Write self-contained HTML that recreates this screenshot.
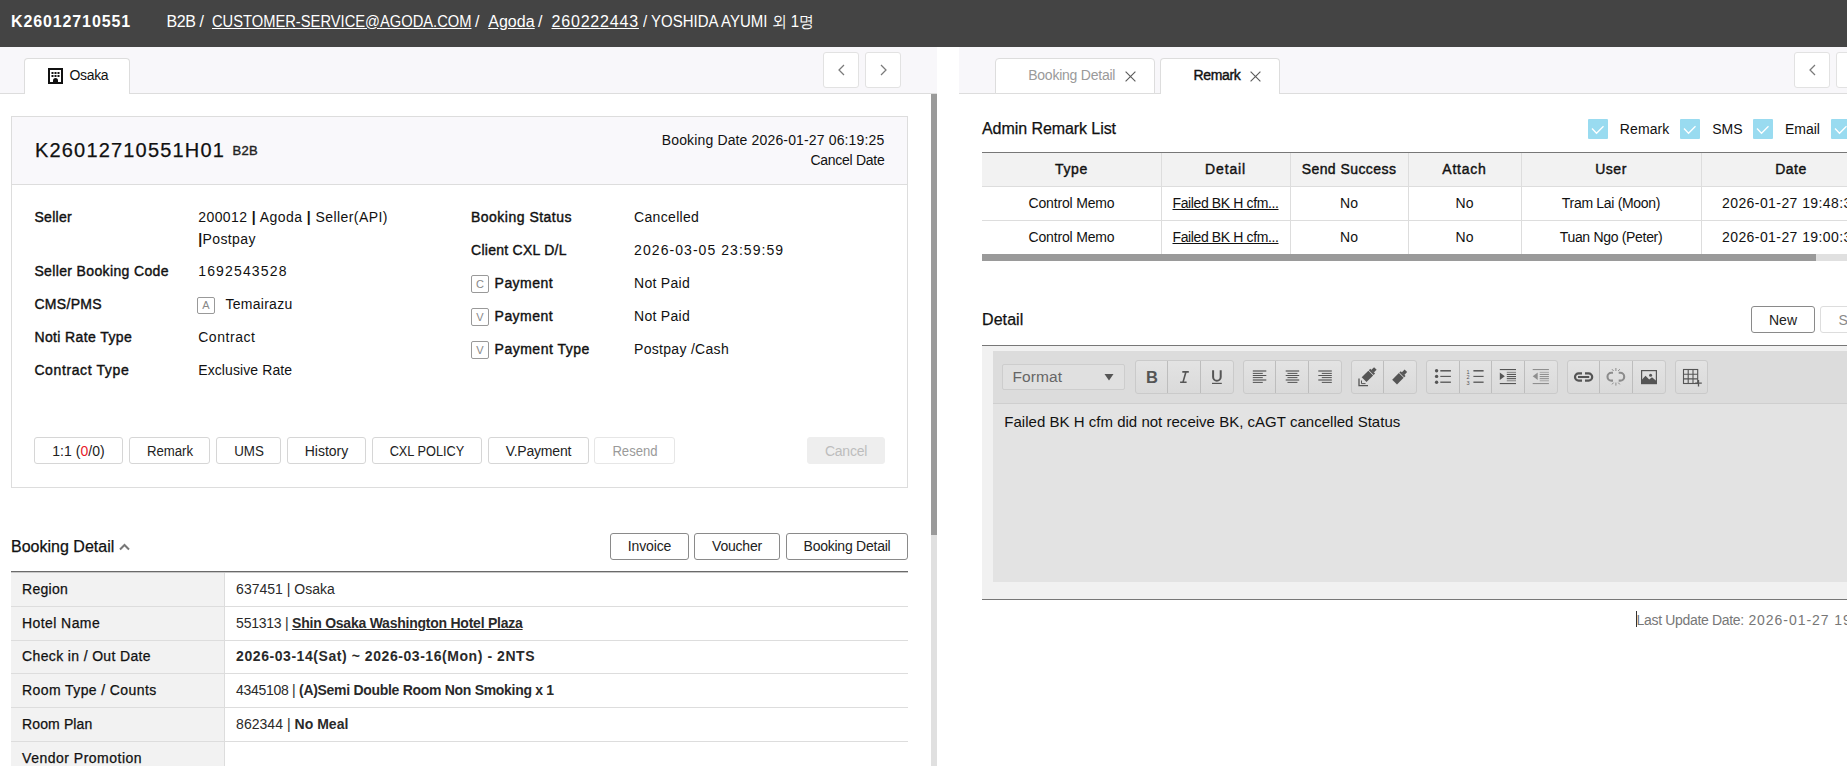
<!DOCTYPE html><html><head><meta charset="utf-8"><style>
html,body{margin:0;padding:0;}
body{width:1847px;height:766px;overflow:hidden;position:relative;background:#fff;font-family:"Liberation Sans", sans-serif;}
b{font-weight:700}
</style></head><body>

<div style="position:absolute;left:0;top:0;width:1847px;height:47px;background:#444444"></div>
<div style="position:absolute;left:0;top:47px;width:937px;height:46px;background:#f8f7fa;border-bottom:1px solid #dddddd"></div>
<div style="position:absolute;left:24px;top:58px;width:106px;height:36px;background:#fff;border:1px solid #dddddd;border-bottom:none;border-radius:4px 4px 0 0;box-sizing:border-box"></div>
<svg style="position:absolute;left:48px;top:68px" width="15" height="16" viewBox="0 0 15 16">
<rect x="1" y="1" width="13" height="14" fill="none" stroke="#111" stroke-width="2"/>
<rect x="3.5" y="4" width="2" height="2" fill="#111"/><rect x="6.5" y="4" width="2" height="2" fill="#111"/><rect x="9.5" y="4" width="2" height="2" fill="#111"/>
<rect x="3.5" y="7" width="2" height="2" fill="#111"/><rect x="6.5" y="7" width="2" height="2" fill="#111"/><rect x="9.5" y="7" width="2" height="2" fill="#111"/>
<path d="M5 15 V12.5 A2.5 2.5 0 0 1 10 12.5 V15 Z" fill="#111"/>
</svg>
<div style="position:absolute;left:823px;top:52px;width:36px;height:36px;background:#fff;border:1px solid #e2e2e2;border-radius:3px;box-sizing:border-box"></div>
<svg style="position:absolute;left:835px;top:62px" width="13" height="16" viewBox="0 0 13 16"><path d="M9 3 L4 8 L9 13" fill="none" stroke="#7a7a7a" stroke-width="1.25"/></svg>
<div style="position:absolute;left:865px;top:52px;width:36px;height:36px;background:#fff;border:1px solid #e2e2e2;border-radius:3px;box-sizing:border-box"></div>
<svg style="position:absolute;left:877px;top:62px" width="13" height="16" viewBox="0 0 13 16"><path d="M4 3 L9 8 L4 13" fill="none" stroke="#7a7a7a" stroke-width="1.25"/></svg>
<div style="position:absolute;left:931px;top:94px;width:6px;height:672px;background:#e0e0e0"></div>
<div style="position:absolute;left:931px;top:94px;width:6px;height:441px;background:#9a9a9a"></div>
<div style="position:absolute;left:11px;top:116px;width:897px;height:372px;border:1px solid #dddddd;box-sizing:border-box;background:#fff"></div>
<div style="position:absolute;left:12px;top:117px;width:895px;height:67px;background:#f9f8fb;border-bottom:1px solid #dddddd"></div>
<div style="position:absolute;left:197px;top:297px;width:18px;height:17px;border:1px solid #999;border-radius:2px;box-sizing:border-box;background:#fff;font:11px/15px 'Liberation Sans',sans-serif;color:#888;text-align:center">A</div>
<div style="position:absolute;left:471px;top:275px;width:18px;height:18px;border:1px solid #999;border-radius:2px;box-sizing:border-box;background:#fff;font:11px/16px 'Liberation Sans',sans-serif;color:#888;text-align:center">C</div>
<div style="position:absolute;left:471px;top:308px;width:18px;height:18px;border:1px solid #999;border-radius:2px;box-sizing:border-box;background:#fff;font:11px/16px 'Liberation Sans',sans-serif;color:#888;text-align:center">V</div>
<div style="position:absolute;left:471px;top:341px;width:18px;height:18px;border:1px solid #999;border-radius:2px;box-sizing:border-box;background:#fff;font:11px/16px 'Liberation Sans',sans-serif;color:#888;text-align:center">V</div>
<div style="position:absolute;left:34px;top:437px;width:89px;height:27px;border:1px solid #d6d6d6;border-radius:3px;box-sizing:border-box;background:#fff"></div>
<div style="position:absolute;left:129px;top:437px;width:81px;height:27px;border:1px solid #d6d6d6;border-radius:3px;box-sizing:border-box;background:#fff"></div>
<div style="position:absolute;left:216px;top:437px;width:65px;height:27px;border:1px solid #d6d6d6;border-radius:3px;box-sizing:border-box;background:#fff"></div>
<div style="position:absolute;left:287px;top:437px;width:79px;height:27px;border:1px solid #d6d6d6;border-radius:3px;box-sizing:border-box;background:#fff"></div>
<div style="position:absolute;left:372px;top:437px;width:110px;height:27px;border:1px solid #d6d6d6;border-radius:3px;box-sizing:border-box;background:#fff"></div>
<div style="position:absolute;left:488px;top:437px;width:101px;height:27px;border:1px solid #d6d6d6;border-radius:3px;box-sizing:border-box;background:#fff"></div>
<div style="position:absolute;left:594px;top:437px;width:81px;height:27px;border:1px solid #e6e6e6;border-radius:3px;box-sizing:border-box;background:#fff"></div>
<div style="position:absolute;left:807px;top:437px;width:78px;height:27px;border:1px solid #eeeeee;border-radius:3px;box-sizing:border-box;background:#eeeeee"></div>
<svg style="position:absolute;left:118px;top:542px" width="13" height="10" viewBox="0 0 13 10"><path d="M2 7.5 L6.5 3 L11 7.5" fill="none" stroke="#777" stroke-width="2"/></svg>
<div style="position:absolute;left:610px;top:533px;width:79px;height:27px;border:1px solid #8a8a8a;border-radius:3px;box-sizing:border-box;background:#fff"></div>
<div style="position:absolute;left:694px;top:533px;width:86px;height:27px;border:1px solid #8a8a8a;border-radius:3px;box-sizing:border-box;background:#fff"></div>
<div style="position:absolute;left:786px;top:533px;width:122px;height:27px;border:1px solid #8a8a8a;border-radius:3px;box-sizing:border-box;background:#fff"></div>
<div style="position:absolute;left:11px;top:571px;width:897px;height:1px;background:#6a6a6a"></div>
<div style="position:absolute;left:11px;top:572px;width:897px;height:1px;background:#c8c8c8"></div>
<div style="position:absolute;left:11px;top:573px;width:213px;height:193px;background:#f2f2f2"></div>
<div style="position:absolute;left:224px;top:573px;width:1px;height:193px;background:#dddddd"></div>
<div style="position:absolute;left:11px;top:606px;width:897px;height:1px;background:#dddddd"></div>
<div style="position:absolute;left:11px;top:640px;width:897px;height:1px;background:#dddddd"></div>
<div style="position:absolute;left:11px;top:673px;width:897px;height:1px;background:#dddddd"></div>
<div style="position:absolute;left:11px;top:707px;width:897px;height:1px;background:#dddddd"></div>
<div style="position:absolute;left:11px;top:741px;width:897px;height:1px;background:#dddddd"></div>
<div style="position:absolute;left:959px;top:47px;width:888px;height:46px;background:#f8f7fa;border-bottom:1px solid #dddddd"></div>
<div style="position:absolute;left:995px;top:58px;width:160px;height:36px;background:#fff;border:1px solid #dddddd;border-radius:4px 4px 0 0;box-sizing:border-box"></div>
<div style="position:absolute;left:1160px;top:58px;width:120px;height:36px;background:#fff;border:1px solid #dddddd;border-bottom:none;border-radius:4px 4px 0 0;box-sizing:border-box"></div>
<svg style="position:absolute;left:1124.5px;top:70.5px" width="11" height="11" viewBox="0 0 11 11"><path d="M0.6 0.6 L10.4 10.4 M10.4 0.6 L0.6 10.4" stroke="#5c5c5c" stroke-width="1.15"/></svg>
<svg style="position:absolute;left:1249.5px;top:70.5px" width="11" height="11" viewBox="0 0 11 11"><path d="M0.6 0.6 L10.4 10.4 M10.4 0.6 L0.6 10.4" stroke="#5c5c5c" stroke-width="1.15"/></svg>
<div style="position:absolute;left:1794px;top:52px;width:36px;height:36px;background:#fff;border:1px solid #e2e2e2;border-radius:3px;box-sizing:border-box"></div>
<svg style="position:absolute;left:1806px;top:62px" width="13" height="16" viewBox="0 0 13 16"><path d="M9 3 L4 8 L9 13" fill="none" stroke="#7a7a7a" stroke-width="1.25"/></svg>
<div style="position:absolute;left:1836px;top:52px;width:36px;height:36px;background:#fff;border:1px solid #e2e2e2;border-radius:3px;box-sizing:border-box"></div>
<div style="position:absolute;left:1588px;top:119px;width:20px;height:20px;background:#99dbf0;border-radius:1px"></div>
<svg style="position:absolute;left:1588px;top:119px" width="20" height="20" viewBox="0 0 20 20"><path d="M4 9.5 L8.5 14.2 L15.5 7.2" fill="none" stroke="#fff" stroke-width="1.3"/></svg>
<div style="position:absolute;left:1680px;top:119px;width:20px;height:20px;background:#99dbf0;border-radius:1px"></div>
<svg style="position:absolute;left:1680px;top:119px" width="20" height="20" viewBox="0 0 20 20"><path d="M4 9.5 L8.5 14.2 L15.5 7.2" fill="none" stroke="#fff" stroke-width="1.3"/></svg>
<div style="position:absolute;left:1753px;top:119px;width:20px;height:20px;background:#99dbf0;border-radius:1px"></div>
<svg style="position:absolute;left:1753px;top:119px" width="20" height="20" viewBox="0 0 20 20"><path d="M4 9.5 L8.5 14.2 L15.5 7.2" fill="none" stroke="#fff" stroke-width="1.3"/></svg>
<div style="position:absolute;left:1831px;top:119px;width:20px;height:20px;background:#99dbf0;border-radius:1px"></div>
<svg style="position:absolute;left:1831px;top:119px" width="20" height="20" viewBox="0 0 20 20"><path d="M4 9.5 L8.5 14.2 L15.5 7.2" fill="none" stroke="#fff" stroke-width="1.3"/></svg>
<div style="position:absolute;left:982px;top:152px;width:865px;height:1px;background:#777"></div>
<div style="position:absolute;left:982px;top:153px;width:865px;height:33px;background:#f2f2f2"></div>
<div style="position:absolute;left:982px;top:186px;width:865px;height:1px;background:#dddddd"></div>
<div style="position:absolute;left:982px;top:220px;width:865px;height:1px;background:#dddddd"></div>
<div style="position:absolute;left:1161px;top:153px;width:1px;height:101px;background:#dddddd"></div>
<div style="position:absolute;left:1290px;top:153px;width:1px;height:101px;background:#dddddd"></div>
<div style="position:absolute;left:1408px;top:153px;width:1px;height:101px;background:#dddddd"></div>
<div style="position:absolute;left:1521px;top:153px;width:1px;height:101px;background:#dddddd"></div>
<div style="position:absolute;left:1701px;top:153px;width:1px;height:101px;background:#dddddd"></div>
<div style="position:absolute;left:982px;top:254px;width:865px;height:7px;background:#e0e0e0"></div>
<div style="position:absolute;left:982px;top:254px;width:834px;height:7px;background:#9a9a9a"></div>
<div style="position:absolute;left:1751px;top:306px;width:64px;height:27px;border:1px solid #8a8a8a;border-radius:3px;box-sizing:border-box;background:#fff"></div>
<div style="position:absolute;left:1820px;top:306px;width:60px;height:27px;border:1px solid #dddddd;border-radius:3px;box-sizing:border-box;background:#fff"></div>
<div style="position:absolute;left:982px;top:345px;width:865px;height:1px;background:#777"></div>
<div style="position:absolute;left:982px;top:346px;width:865px;height:253px;background:#f1f1f1"></div>
<div style="position:absolute;left:982px;top:599px;width:865px;height:1px;background:#777"></div>
<div style="position:absolute;left:993px;top:351px;width:854px;height:52px;background:#dcdcdc;border-bottom:1px solid #cfcfcf"></div>
<div style="position:absolute;left:993px;top:404px;width:854px;height:178px;background:#e3e3e3"></div>
<div style="position:absolute;left:1002px;top:364px;width:123px;height:26px;background:#e0e0e0;border:1px solid #cdcdcd;border-radius:2px;box-sizing:border-box"></div>
<svg style="position:absolute;left:1104px;top:373px" width="10" height="8" viewBox="0 0 10 8"><path d="M0.5 1 L9.5 1 L5 7.5 Z" fill="#555"/></svg>
<div style="position:absolute;left:1135px;top:360px;width:99px;height:34px;background:linear-gradient(#e3e3e3,#dadada);border:1px solid #cacaca;border-radius:3px;box-sizing:border-box"></div>
<div style="position:absolute;left:1167px;top:361px;width:1px;height:32px;background:#bdbdbd"></div>
<div style="position:absolute;left:1200px;top:361px;width:1px;height:32px;background:#bdbdbd"></div>
<div style="position:absolute;left:1243px;top:360px;width:99px;height:34px;background:linear-gradient(#e3e3e3,#dadada);border:1px solid #cacaca;border-radius:3px;box-sizing:border-box"></div>
<div style="position:absolute;left:1275px;top:361px;width:1px;height:32px;background:#bdbdbd"></div>
<div style="position:absolute;left:1308px;top:361px;width:1px;height:32px;background:#bdbdbd"></div>
<div style="position:absolute;left:1351px;top:360px;width:66px;height:34px;background:linear-gradient(#e3e3e3,#dadada);border:1px solid #cacaca;border-radius:3px;box-sizing:border-box"></div>
<div style="position:absolute;left:1383px;top:361px;width:1px;height:32px;background:#bdbdbd"></div>
<div style="position:absolute;left:1426px;top:360px;width:132px;height:34px;background:linear-gradient(#e3e3e3,#dadada);border:1px solid #cacaca;border-radius:3px;box-sizing:border-box"></div>
<div style="position:absolute;left:1459px;top:361px;width:1px;height:32px;background:#bdbdbd"></div>
<div style="position:absolute;left:1491px;top:361px;width:1px;height:32px;background:#bdbdbd"></div>
<div style="position:absolute;left:1524px;top:361px;width:1px;height:32px;background:#bdbdbd"></div>
<div style="position:absolute;left:1567px;top:360px;width:99px;height:34px;background:linear-gradient(#e3e3e3,#dadada);border:1px solid #cacaca;border-radius:3px;box-sizing:border-box"></div>
<div style="position:absolute;left:1599px;top:361px;width:1px;height:32px;background:#bdbdbd"></div>
<div style="position:absolute;left:1632px;top:361px;width:1px;height:32px;background:#bdbdbd"></div>
<div style="position:absolute;left:1675px;top:360px;width:33px;height:34px;background:linear-gradient(#e3e3e3,#dadada);border:1px solid #cacaca;border-radius:3px;box-sizing:border-box"></div>
<svg style="position:absolute;left:0;top:0" width="1847" height="766" viewBox="0 0 1847 766"><text x="1146" y="383" font-family="Liberation Sans" font-weight="700" font-size="16.5" fill="#555">B</text><path d="M1182.3 371.9 H1188.8 M1180.1 382.2 H1186.6 M1185.9 372 L1183 382.1" fill="none" stroke="#555" stroke-width="1.6"/><path d="M1213.1 370.2 V376.9 A3.8 3.8 0 0 0 1220.7 376.9 V370.2" fill="none" stroke="#555" stroke-width="2"/><rect x="1212" y="382.8" width="9.8" height="1.2" fill="#555"/><rect x="1252.80" y="370.2" width="13.5" height="1.6" fill="#7a7a7a"/><rect x="1252.80" y="372.9" width="10" height="1" fill="#555"/><rect x="1252.80" y="375" width="13.5" height="1" fill="#555"/><rect x="1252.80" y="377.1" width="10" height="1" fill="#555"/><rect x="1252.80" y="379.2" width="13.5" height="1.6" fill="#7a7a7a"/><rect x="1252.80" y="381.9" width="10" height="1" fill="#555"/><rect x="1285.70" y="370.2" width="13.5" height="1.6" fill="#7a7a7a"/><rect x="1287.45" y="372.9" width="10" height="1" fill="#555"/><rect x="1285.70" y="375" width="13.5" height="1" fill="#555"/><rect x="1287.45" y="377.1" width="10" height="1" fill="#555"/><rect x="1285.70" y="379.2" width="13.5" height="1.6" fill="#7a7a7a"/><rect x="1287.45" y="381.9" width="10" height="1" fill="#555"/><rect x="1318.30" y="370.2" width="13.5" height="1.6" fill="#7a7a7a"/><rect x="1321.80" y="372.9" width="10" height="1" fill="#555"/><rect x="1318.30" y="375" width="13.5" height="1" fill="#555"/><rect x="1321.80" y="377.1" width="10" height="1" fill="#555"/><rect x="1318.30" y="379.2" width="13.5" height="1.6" fill="#7a7a7a"/><rect x="1321.80" y="381.9" width="10" height="1" fill="#555"/><g transform="translate(1370.4 373.4) rotate(45)" fill="#555"><rect x="-3.4" y="-0.5" width="6.8" height="9.4"/><rect x="-3.4" y="-3.2" width="6.8" height="2"/><rect x="-1.8" y="-7" width="3.6" height="4"/></g><path d="M1359 378.5 V385.6 H1368" fill="none" stroke="#555" stroke-width="1.3"/><path d="M1361.5 380.5 V383.6 H1365.5" fill="none" stroke="#555" stroke-width="1"/><g transform="translate(1400.9 375.8) rotate(45)" fill="#555"><rect x="-3.4" y="-0.5" width="6.8" height="9.4"/><rect x="-3.4" y="-3.2" width="6.8" height="2"/><rect x="-1.8" y="-7" width="3.6" height="4"/></g><circle cx="1436.6" cy="370.8" r="1.7" fill="#555"/><rect x="1440.3" y="370.05" width="10.6" height="1.5" fill="#555"/><circle cx="1436.6" cy="376.4" r="1.7" fill="#555"/><rect x="1440.3" y="375.85" width="10.6" height="1.1" fill="#555"/><circle cx="1436.6" cy="382.2" r="1.7" fill="#555"/><rect x="1440.3" y="381.55" width="10.6" height="1.3" fill="#555"/><g font-family="Liberation Sans" font-size="5.5" fill="#555"><text x="1466.6" y="373.6">1</text><text x="1466.6" y="379.2">2</text><text x="1466.6" y="385">3</text></g><rect x="1473.4" y="370.05" width="10.2" height="1.5" fill="#555"/><rect x="1473.4" y="375.85" width="10.2" height="1.1" fill="#555"/><rect x="1473.4" y="381.55" width="10.2" height="1.3" fill="#555"/><rect x="1499.8" y="369" width="16.2" height="1.1" fill="#555"/><rect x="1499.8" y="383" width="16.2" height="1.1" fill="#555"/><rect x="1506.8" y="371.8" width="9.2" height="1.1" fill="#8a8a8a"/><rect x="1506.8" y="373.9" width="9.2" height="1.1" fill="#555"/><rect x="1506.8" y="376" width="9.2" height="1.1" fill="#555"/><rect x="1506.8" y="378.1" width="9.2" height="1.1" fill="#555"/><rect x="1506.8" y="380.2" width="9.2" height="1.1" fill="#8a8a8a"/><path d="M1499.8 372.6 L1504.8 376.3 L1499.8 380 Z" fill="#555"/><rect x="1532.7" y="369" width="16.2" height="1.1" fill="#8f8f8f"/><rect x="1532.7" y="383" width="16.2" height="1.1" fill="#8f8f8f"/><rect x="1539.7" y="371.8" width="9.2" height="1.1" fill="#aaaaaa"/><rect x="1539.7" y="373.9" width="9.2" height="1.1" fill="#8f8f8f"/><rect x="1539.7" y="376" width="9.2" height="1.1" fill="#8f8f8f"/><rect x="1539.7" y="378.1" width="9.2" height="1.1" fill="#8f8f8f"/><rect x="1539.7" y="380.2" width="9.2" height="1.1" fill="#aaaaaa"/><path d="M1537.7 372.6 L1532.7 376.3 L1537.7 380 Z" fill="#8f8f8f"/><g fill="none" stroke="#555" stroke-width="2.2"><path d="M1582 373.4 H1578.6 A3.6 3.6 0 0 0 1578.6 380.6 H1582"/><path d="M1585 373.4 H1588.6 A3.6 3.6 0 0 1 1588.6 380.6 H1585"/></g><rect x="1578" y="376" width="11.2" height="2" fill="#555"/><g fill="none" stroke="#8c8c8c" stroke-width="2.1"><path d="M1613 372.8 H1611.4 A3.9 3.9 0 0 0 1611.4 380.6 H1613"/><path d="M1618.7 372.8 H1620.3 A3.9 3.9 0 0 1 1620.3 380.6 H1618.7"/></g><g stroke="#8c8c8c" stroke-width="1"><path d="M1615.9 368 V371 M1615.9 382.6 V385.6 M1612 369.2 L1613.6 371 M1619.8 369.2 L1618.2 371 M1612 384.4 L1613.6 382.6 M1619.8 384.4 L1618.2 382.6"/></g><rect x="1641.6" y="370.6" width="14.8" height="13" fill="none" stroke="#555" stroke-width="1.2"/><path d="M1641.6 383.6 V380 L1645.5 375.8 L1649.2 379.4 L1652 377.2 L1656.4 381 V383.6 Z" fill="#555"/><circle cx="1650.6" cy="375.2" r="1.5" fill="#555"/><g fill="none" stroke="#555" stroke-width="1.1"><rect x="1683.5" y="369.5" width="14.2" height="14"/><path d="M1688.2 369.5 V383.5 M1693 369.5 V383.5 M1683.5 374.2 H1697.7 M1683.5 378.9 H1697.7"/></g><path d="M1698.5 380 V386.5 M1695.2 383.2 H1701.8" stroke="#555" stroke-width="1.3"/></svg>
<div style="position:absolute;left:1636px;top:611px;width:1px;height:16px;background:#333"></div>
<div style="position:absolute;top:14px;font-size:16px;font-weight:700;color:#fff;line-height:1;white-space:nowrap;letter-spacing:0.880px;left:11.00px;">K26012710551</div>
<div style="position:absolute;top:14px;font-size:16px;font-weight:400;color:#fff;line-height:1;white-space:nowrap;letter-spacing:-0.368px;left:166.40px;">B2B /</div>
<div style="position:absolute;top:14px;font-size:16px;font-weight:400;color:#fff;line-height:1;white-space:nowrap;left:212.20px;transform-origin:0 0;transform:scaleX(0.9190);text-decoration:underline">CUSTOMER-SERVICE@AGODA.COM</div>
<div style="position:absolute;top:14px;font-size:16px;font-weight:400;color:#fff;line-height:1;white-space:nowrap;left:475.00px;">/</div>
<div style="position:absolute;top:14px;font-size:16px;font-weight:400;color:#fff;line-height:1;white-space:nowrap;letter-spacing:0.047px;left:488.20px;text-decoration:underline">Agoda</div>
<div style="position:absolute;top:14px;font-size:16px;font-weight:400;color:#fff;line-height:1;white-space:nowrap;left:538.00px;">/</div>
<div style="position:absolute;top:14px;font-size:16px;font-weight:400;color:#fff;line-height:1;white-space:nowrap;letter-spacing:0.812px;left:551.50px;text-decoration:underline">260222443</div>
<div style="position:absolute;top:14px;font-size:16px;font-weight:400;color:#fff;line-height:1;white-space:nowrap;left:642.50px;transform-origin:0 0;transform:scaleX(0.9366);">/ YOSHIDA AYUMI 외 1명</div>
<div style="position:absolute;top:68px;font-size:14px;font-weight:400;color:#111;line-height:1;white-space:nowrap;letter-spacing:-0.334px;left:69.50px;">Osaka</div>
<div style="position:absolute;top:140px;font-size:20px;font-weight:400;-webkit-text-stroke:0.25px currentColor;color:#111;line-height:1;white-space:nowrap;letter-spacing:1.174px;left:35.00px;">K26012710551H01</div>
<div style="position:absolute;top:144px;font-size:13px;font-weight:400;-webkit-text-stroke:0.4px currentColor;color:#222;line-height:1;white-space:nowrap;letter-spacing:0.307px;left:232.50px;">B2B</div>
<div style="position:absolute;top:133px;font-size:14px;font-weight:400;color:#111;line-height:1;white-space:nowrap;letter-spacing:0.148px;right:962.60px;">Booking Date 2026-01-27 06:19:25</div>
<div style="position:absolute;top:153px;font-size:14px;font-weight:400;color:#111;line-height:1;white-space:nowrap;letter-spacing:-0.277px;right:962.60px;">Cancel Date</div>
<div style="position:absolute;top:210px;font-size:14px;font-weight:400;-webkit-text-stroke:0.4px currentColor;color:#111;line-height:1;white-space:nowrap;letter-spacing:0.317px;left:34.40px;">Seller</div>
<div style="position:absolute;top:264px;font-size:14px;font-weight:400;-webkit-text-stroke:0.4px currentColor;color:#111;line-height:1;white-space:nowrap;letter-spacing:0.361px;left:34.40px;">Seller Booking Code</div>
<div style="position:absolute;top:297px;font-size:14px;font-weight:400;-webkit-text-stroke:0.4px currentColor;color:#111;line-height:1;white-space:nowrap;letter-spacing:0.322px;left:34.40px;">CMS/PMS</div>
<div style="position:absolute;top:330px;font-size:14px;font-weight:400;-webkit-text-stroke:0.4px currentColor;color:#111;line-height:1;white-space:nowrap;letter-spacing:0.389px;left:34.40px;">Noti Rate Type</div>
<div style="position:absolute;top:363px;font-size:14px;font-weight:400;-webkit-text-stroke:0.4px currentColor;color:#111;line-height:1;white-space:nowrap;letter-spacing:0.615px;left:34.40px;">Contract Type</div>
<div style="position:absolute;top:210px;font-size:14px;font-weight:400;color:#111;line-height:1;white-space:nowrap;letter-spacing:0.435px;left:198.20px;">200012 <b>|</b> Agoda <b>|</b> Seller(API)</div>
<div style="position:absolute;top:232px;font-size:14px;font-weight:400;color:#111;line-height:1;white-space:nowrap;letter-spacing:0.386px;left:198.20px;"><b>|</b>Postpay</div>
<div style="position:absolute;top:264px;font-size:14px;font-weight:400;color:#111;line-height:1;white-space:nowrap;letter-spacing:1.153px;left:198.20px;">1692543528</div>
<div style="position:absolute;top:297px;font-size:14px;font-weight:400;color:#111;line-height:1;white-space:nowrap;letter-spacing:0.267px;left:225.50px;">Temairazu</div>
<div style="position:absolute;top:330px;font-size:14px;font-weight:400;color:#111;line-height:1;white-space:nowrap;letter-spacing:0.547px;left:198.20px;">Contract</div>
<div style="position:absolute;top:363px;font-size:14px;font-weight:400;color:#111;line-height:1;white-space:nowrap;letter-spacing:0.100px;left:198.20px;">Exclusive Rate</div>
<div style="position:absolute;top:210px;font-size:14px;font-weight:400;-webkit-text-stroke:0.4px currentColor;color:#111;line-height:1;white-space:nowrap;letter-spacing:0.488px;left:471.00px;">Booking Status</div>
<div style="position:absolute;top:243px;font-size:14px;font-weight:400;-webkit-text-stroke:0.4px currentColor;color:#111;line-height:1;white-space:nowrap;letter-spacing:0.266px;left:471.00px;">Client CXL D/L</div>
<div style="position:absolute;top:276px;font-size:14px;font-weight:400;-webkit-text-stroke:0.4px currentColor;color:#111;line-height:1;white-space:nowrap;letter-spacing:0.450px;left:494.60px;">Payment</div>
<div style="position:absolute;top:309px;font-size:14px;font-weight:400;-webkit-text-stroke:0.4px currentColor;color:#111;line-height:1;white-space:nowrap;letter-spacing:0.450px;left:494.60px;">Payment</div>
<div style="position:absolute;top:342px;font-size:14px;font-weight:400;-webkit-text-stroke:0.4px currentColor;color:#111;line-height:1;white-space:nowrap;letter-spacing:0.496px;left:494.60px;">Payment Type</div>
<div style="position:absolute;top:210px;font-size:14px;font-weight:400;color:#111;line-height:1;white-space:nowrap;letter-spacing:0.315px;left:634.10px;">Cancelled</div>
<div style="position:absolute;top:243px;font-size:14px;font-weight:400;color:#111;line-height:1;white-space:nowrap;letter-spacing:1.058px;left:634.10px;">2026-03-05 23:59:59</div>
<div style="position:absolute;top:276px;font-size:14px;font-weight:400;color:#111;line-height:1;white-space:nowrap;letter-spacing:0.275px;left:634.10px;">Not Paid</div>
<div style="position:absolute;top:309px;font-size:14px;font-weight:400;color:#111;line-height:1;white-space:nowrap;letter-spacing:0.275px;left:634.10px;">Not Paid</div>
<div style="position:absolute;top:342px;font-size:14px;font-weight:400;color:#111;line-height:1;white-space:nowrap;letter-spacing:0.295px;left:634.10px;">Postpay /Cash</div>
<div style="position:absolute;top:444px;font-size:14px;font-weight:400;color:#222;line-height:1;white-space:nowrap;letter-spacing:0.049px;left:78.50px;transform:translateX(-50%);">1:1 (<span style="color:#e8192c">0</span>/0)</div>
<div style="position:absolute;top:444px;font-size:14px;font-weight:400;color:#222;line-height:1;white-space:nowrap;left:169.50px;transform:translateX(-50%) scaleX(0.9426);">Remark</div>
<div style="position:absolute;top:444px;font-size:14px;font-weight:400;color:#222;line-height:1;white-space:nowrap;left:248.50px;transform:translateX(-50%) scaleX(0.9542);">UMS</div>
<div style="position:absolute;top:444px;font-size:14px;font-weight:400;color:#222;line-height:1;white-space:nowrap;letter-spacing:-0.009px;left:326.50px;transform:translateX(-50%);">History</div>
<div style="position:absolute;top:444px;font-size:14px;font-weight:400;color:#222;line-height:1;white-space:nowrap;left:427.00px;transform:translateX(-50%) scaleX(0.9113);">CXL POLICY</div>
<div style="position:absolute;top:444px;font-size:14px;font-weight:400;color:#222;line-height:1;white-space:nowrap;letter-spacing:-0.211px;left:538.50px;transform:translateX(-50%);">V.Payment</div>
<div style="position:absolute;top:444px;font-size:14px;font-weight:400;color:#9a9a9a;line-height:1;white-space:nowrap;left:634.50px;transform:translateX(-50%) scaleX(0.9365);">Resend</div>
<div style="position:absolute;top:444px;font-size:14px;font-weight:400;color:#bdbdbd;line-height:1;white-space:nowrap;letter-spacing:-0.249px;left:846.00px;transform:translateX(-50%);">Cancel</div>
<div style="position:absolute;top:539px;font-size:16px;font-weight:400;-webkit-text-stroke:0.25px currentColor;color:#111;line-height:1;white-space:nowrap;letter-spacing:0.009px;left:11.00px;">Booking Detail</div>
<div style="position:absolute;top:539px;font-size:14px;font-weight:400;color:#222;line-height:1;white-space:nowrap;letter-spacing:-0.123px;left:649.50px;transform:translateX(-50%);">Invoice</div>
<div style="position:absolute;top:539px;font-size:14px;font-weight:400;color:#222;line-height:1;white-space:nowrap;letter-spacing:-0.211px;left:737.00px;transform:translateX(-50%);">Voucher</div>
<div style="position:absolute;top:539px;font-size:14px;font-weight:400;color:#222;line-height:1;white-space:nowrap;letter-spacing:-0.242px;left:847.00px;transform:translateX(-50%);">Booking Detail</div>
<div style="position:absolute;top:582px;font-size:14px;font-weight:400;-webkit-text-stroke:0.25px currentColor;color:#111;line-height:1;white-space:nowrap;letter-spacing:0.271px;left:22.10px;">Region</div>
<div style="position:absolute;top:582px;font-size:14px;font-weight:400;color:#2a2a2a;line-height:1;white-space:nowrap;letter-spacing:0.006px;left:236.10px;">637451 | Osaka</div>
<div style="position:absolute;top:616px;font-size:14px;font-weight:400;-webkit-text-stroke:0.25px currentColor;color:#111;line-height:1;white-space:nowrap;letter-spacing:0.408px;left:22.10px;">Hotel Name</div>
<div style="position:absolute;top:616px;font-size:14px;font-weight:400;color:#2a2a2a;line-height:1;white-space:nowrap;letter-spacing:-0.237px;left:236.10px;">551313 | <b style="text-decoration:underline">Shin Osaka Washington Hotel Plaza</b></div>
<div style="position:absolute;top:649px;font-size:14px;font-weight:400;-webkit-text-stroke:0.25px currentColor;color:#111;line-height:1;white-space:nowrap;letter-spacing:0.354px;left:22.10px;">Check in / Out Date</div>
<div style="position:absolute;top:649px;font-size:14px;font-weight:400;color:#2a2a2a;line-height:1;white-space:nowrap;letter-spacing:0.560px;left:236.10px;"><b>2026-03-14(Sat) ~ 2026-03-16(Mon) - 2NTS</b></div>
<div style="position:absolute;top:683px;font-size:14px;font-weight:400;-webkit-text-stroke:0.25px currentColor;color:#111;line-height:1;white-space:nowrap;letter-spacing:0.396px;left:22.10px;">Room Type / Counts</div>
<div style="position:absolute;top:683px;font-size:14px;font-weight:400;color:#2a2a2a;line-height:1;white-space:nowrap;letter-spacing:-0.299px;left:236.10px;">4345108 | <b>(A)Semi Double Room Non Smoking x 1</b></div>
<div style="position:absolute;top:717px;font-size:14px;font-weight:400;-webkit-text-stroke:0.25px currentColor;color:#111;line-height:1;white-space:nowrap;letter-spacing:0.115px;left:22.10px;">Room Plan</div>
<div style="position:absolute;top:717px;font-size:14px;font-weight:400;color:#2a2a2a;line-height:1;white-space:nowrap;letter-spacing:0.029px;left:236.10px;">862344 | <b>No Meal</b></div>
<div style="position:absolute;top:751px;font-size:14px;font-weight:400;-webkit-text-stroke:0.25px currentColor;color:#111;line-height:1;white-space:nowrap;letter-spacing:0.495px;left:22.10px;">Vendor Promotion</div>
<div style="position:absolute;top:68px;font-size:14px;font-weight:400;color:#9a9a9a;line-height:1;white-space:nowrap;letter-spacing:-0.234px;left:1028.20px;">Booking Detail</div>
<div style="position:absolute;top:68px;font-size:14px;font-weight:400;-webkit-text-stroke:0.4px currentColor;color:#111;line-height:1;white-space:nowrap;letter-spacing:-0.336px;left:1193.50px;">Remark</div>
<div style="position:absolute;top:121px;font-size:16px;font-weight:400;-webkit-text-stroke:0.25px currentColor;color:#111;line-height:1;white-space:nowrap;letter-spacing:-0.068px;left:982.00px;">Admin Remark List</div>
<div style="position:absolute;top:122px;font-size:14px;font-weight:400;color:#111;line-height:1;white-space:nowrap;letter-spacing:0.114px;left:1619.80px;">Remark</div>
<div style="position:absolute;top:122px;font-size:14px;font-weight:400;color:#111;line-height:1;white-space:nowrap;letter-spacing:-0.048px;left:1712.30px;">SMS</div>
<div style="position:absolute;top:122px;font-size:14px;font-weight:400;color:#111;line-height:1;white-space:nowrap;letter-spacing:-0.043px;left:1785.00px;">Email</div>
<div style="position:absolute;top:162px;font-size:14px;font-weight:400;-webkit-text-stroke:0.4px currentColor;color:#111;line-height:1;white-space:nowrap;letter-spacing:0.710px;left:1071.50px;transform:translateX(-50%);">Type</div>
<div style="position:absolute;top:162px;font-size:14px;font-weight:400;-webkit-text-stroke:0.4px currentColor;color:#111;line-height:1;white-space:nowrap;letter-spacing:0.867px;left:1225.50px;transform:translateX(-50%);">Detail</div>
<div style="position:absolute;top:162px;font-size:14px;font-weight:400;-webkit-text-stroke:0.4px currentColor;color:#111;line-height:1;white-space:nowrap;letter-spacing:0.433px;left:1349.00px;transform:translateX(-50%);">Send Success</div>
<div style="position:absolute;top:162px;font-size:14px;font-weight:400;-webkit-text-stroke:0.4px currentColor;color:#111;line-height:1;white-space:nowrap;letter-spacing:0.766px;left:1464.50px;transform:translateX(-50%);">Attach</div>
<div style="position:absolute;top:162px;font-size:14px;font-weight:400;-webkit-text-stroke:0.4px currentColor;color:#111;line-height:1;white-space:nowrap;letter-spacing:0.534px;left:1611.00px;transform:translateX(-50%);">User</div>
<div style="position:absolute;top:162px;font-size:14px;font-weight:400;-webkit-text-stroke:0.4px currentColor;color:#111;line-height:1;white-space:nowrap;letter-spacing:0.530px;left:1791.00px;transform:translateX(-50%);">Date</div>
<div style="position:absolute;top:196px;font-size:14px;font-weight:400;color:#111;line-height:1;white-space:nowrap;letter-spacing:-0.160px;left:1071.50px;transform:translateX(-50%);">Control Memo</div>
<div style="position:absolute;top:196px;font-size:14px;font-weight:400;color:#111;line-height:1;white-space:nowrap;letter-spacing:-0.378px;left:1225.50px;transform:translateX(-50%);"><span style="text-decoration:underline">Failed BK H cfm...</span></div>
<div style="position:absolute;top:196px;font-size:14px;font-weight:400;color:#111;line-height:1;white-space:nowrap;letter-spacing:-0.003px;left:1349.00px;transform:translateX(-50%);">No</div>
<div style="position:absolute;top:196px;font-size:14px;font-weight:400;color:#111;line-height:1;white-space:nowrap;letter-spacing:-0.003px;left:1464.50px;transform:translateX(-50%);">No</div>
<div style="position:absolute;top:196px;font-size:14px;font-weight:400;color:#111;line-height:1;white-space:nowrap;letter-spacing:-0.310px;left:1611.00px;transform:translateX(-50%);">Tram Lai (Moon)</div>
<div style="position:absolute;top:196px;font-size:14px;font-weight:400;color:#111;line-height:1;white-space:nowrap;letter-spacing:0.421px;left:1791.00px;transform:translateX(-50%);">2026-01-27 19:48:36</div>
<div style="position:absolute;top:230px;font-size:14px;font-weight:400;color:#111;line-height:1;white-space:nowrap;letter-spacing:-0.160px;left:1071.50px;transform:translateX(-50%);">Control Memo</div>
<div style="position:absolute;top:230px;font-size:14px;font-weight:400;color:#111;line-height:1;white-space:nowrap;letter-spacing:-0.378px;left:1225.50px;transform:translateX(-50%);"><span style="text-decoration:underline">Failed BK H cfm...</span></div>
<div style="position:absolute;top:230px;font-size:14px;font-weight:400;color:#111;line-height:1;white-space:nowrap;letter-spacing:-0.003px;left:1349.00px;transform:translateX(-50%);">No</div>
<div style="position:absolute;top:230px;font-size:14px;font-weight:400;color:#111;line-height:1;white-space:nowrap;letter-spacing:-0.003px;left:1464.50px;transform:translateX(-50%);">No</div>
<div style="position:absolute;top:230px;font-size:14px;font-weight:400;color:#111;line-height:1;white-space:nowrap;letter-spacing:-0.315px;left:1611.00px;transform:translateX(-50%);">Tuan Ngo (Peter)</div>
<div style="position:absolute;top:230px;font-size:14px;font-weight:400;color:#111;line-height:1;white-space:nowrap;letter-spacing:0.421px;left:1791.00px;transform:translateX(-50%);">2026-01-27 19:00:36</div>
<div style="position:absolute;top:312px;font-size:16px;font-weight:400;-webkit-text-stroke:0.25px currentColor;color:#111;line-height:1;white-space:nowrap;letter-spacing:0.082px;left:982.00px;">Detail</div>
<div style="position:absolute;top:313px;font-size:14px;font-weight:400;color:#222;line-height:1;white-space:nowrap;left:1783.00px;transform:translateX(-50%);">New</div>
<div style="position:absolute;top:313px;font-size:14px;font-weight:400;color:#8a8a8a;line-height:1;white-space:nowrap;left:1838.50px;">S</div>
<div style="position:absolute;top:369px;font-size:15.5px;font-weight:400;color:#666;line-height:1;white-space:nowrap;letter-spacing:0.101px;left:1012.50px;">Format</div>
<div style="position:absolute;top:414px;font-size:15px;font-weight:400;color:#111;line-height:1;white-space:nowrap;letter-spacing:0.019px;left:1004.30px;">Failed BK H cfm did not receive BK, cAGT cancelled Status</div>
<div style="position:absolute;top:613px;font-size:14px;font-weight:400;color:#777;line-height:1;white-space:nowrap;letter-spacing:-0.327px;left:1636.60px;">Last Update Date:</div>
<div style="position:absolute;top:613px;font-size:14px;font-weight:400;color:#777;line-height:1;white-space:nowrap;letter-spacing:0.947px;left:1748.40px;">2026-01-27 19:48:36</div>
</body></html>
